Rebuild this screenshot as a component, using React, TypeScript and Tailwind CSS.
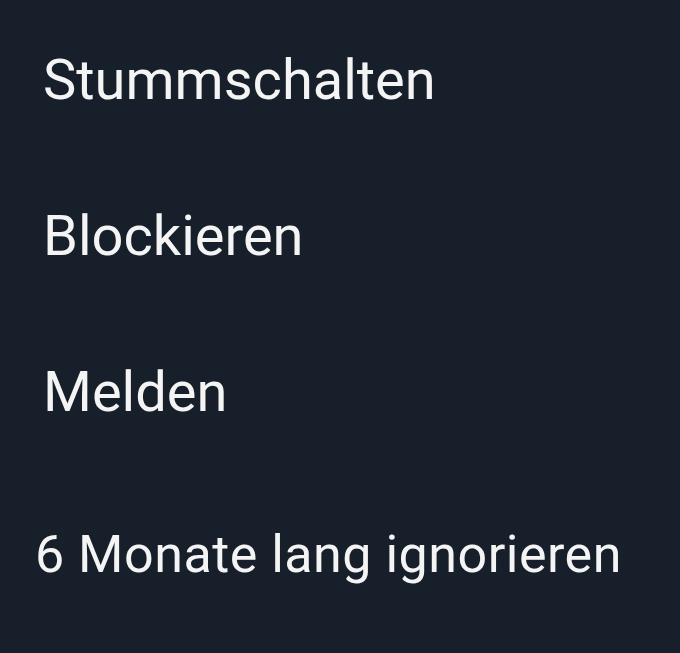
export default function App() {
  const items = ["Stummschalten", "Blockieren", "Melden"];
  return (
    <div className="w-[680px] h-[653px] bg-[#161f2a] overflow-hidden font-['Roboto',sans-serif] text-[#f4f4f4]">
      <div className="flex flex-col pt-[52px] pl-[43px] gap-[100px]">
        {items.map((t) => (
          <div key={t} className="text-[56px] leading-[56px]">
            {t}
          </div>
        ))}
      </div>
      <div className="pl-[35px] mt-[109px] text-[52px] leading-[52px] tracking-[0.5px]">
        6 Monate lang ignorieren
      </div>
    </div>
  );
}
